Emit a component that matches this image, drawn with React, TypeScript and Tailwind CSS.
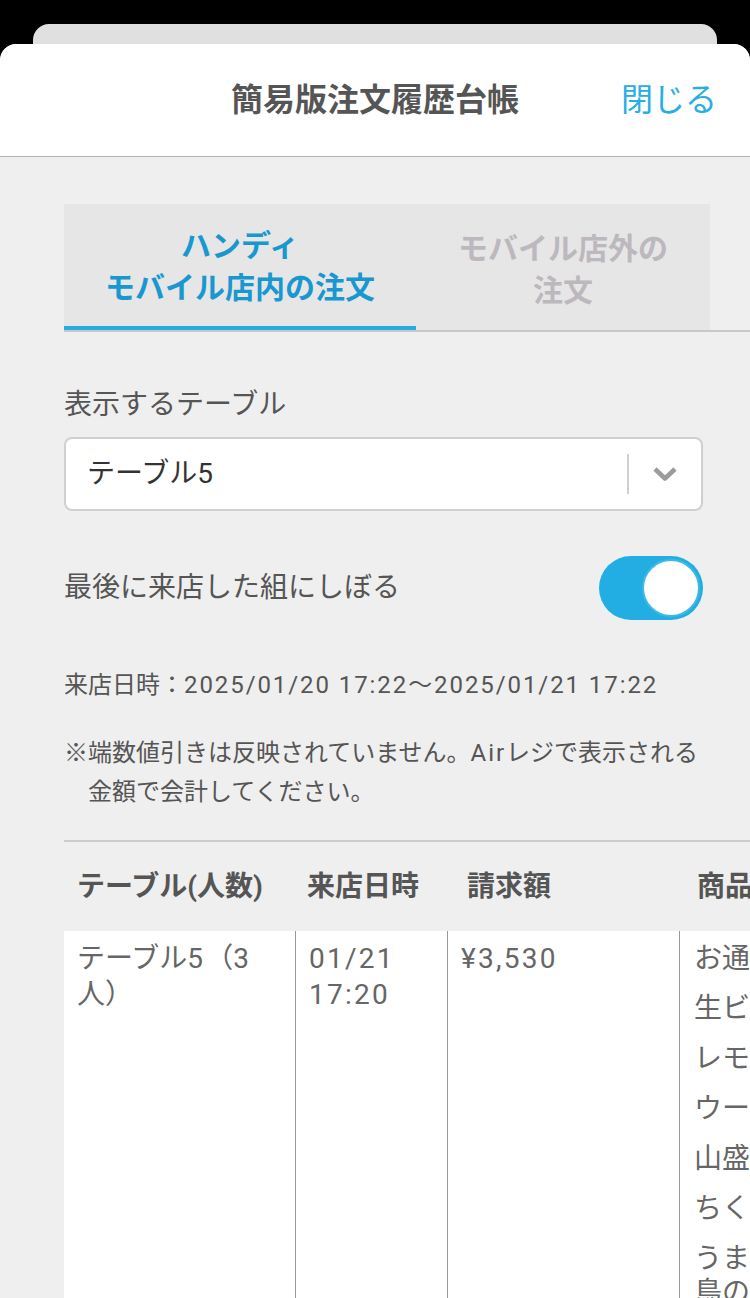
const items = [
  "お通し",
  "生ビール（中）",
  "レモンサワー",
  "ウーロン茶",
  "山盛りポテトフライ",
  "ちくわの磯辺揚げ",
  "うまみたっぷり炭火焼き鳥の盛り合わせ",
];

// Latin digits in the reference run wider than Roboto, so they get a bit of tracking
const Num = ({ children }: { children: React.ReactNode }) => (
  <span className="tracking-[0.08em]">{children}</span>
);

export default function App() {
  return (
    <div className="h-[1298px] overflow-hidden bg-black pt-[24px] font-['Roboto','Noto_Sans_CJK_JP',sans-serif]">
      {/* sheet behind */}
      <div className="mx-[33px] h-[20px] rounded-t-[16px] bg-[#e0e0e0]" />

      <div className="h-full overflow-hidden rounded-t-[16px] bg-[#efefef]">
        {/* header */}
        <header className="grid h-[113px] grid-cols-[1fr_auto_1fr] items-center rounded-t-[16px] border-b border-[#b3b3b3] bg-white">
          <div />
          <h1 className="text-[32px] font-bold text-[#555]">簡易版注文履歴台帳</h1>
          <button className="justify-self-end pr-[33px] text-[32px] text-[#27aee5]">閉じる</button>
        </header>

        {/* tabs */}
        <div className="mt-[47px] ml-[64px] border-b-2 border-[#c8c8c8]">
          <div className="flex h-[126px] w-[646px] bg-[#e6e6e6]">
            <div className="flex w-[352px] flex-col items-center justify-center border-b-4 border-[#22aee3] pt-[4px] text-[30px] font-bold leading-[42px] text-[#1897d0]">
              <span>ハンディ</span>
              <span>モバイル店内の注文</span>
            </div>
            <div className="flex flex-1 flex-col items-center justify-center pt-[6px] text-[30px] font-bold leading-[42px] text-[#bdb8be]">
              <span>モバイル店外の</span>
              <span>注文</span>
            </div>
          </div>
        </div>

        {/* form */}
        <div className="pl-[64px] pr-[47px]">
          <p className="mt-[53px] text-[28px] leading-[40px] text-[#555]">表示するテーブル</p>
          <div className="mt-[12px] flex h-[74px] items-center rounded-[8px] border-2 border-[#d0d0d0] bg-white pl-[21px]">
            <span className="flex-1 text-[28px] text-[#333]">
              テーブル<Num>5</Num>
            </span>
            <div className="h-[40px] w-[2px] bg-[#cfcfcf]" />
            <div className="flex w-[72px] items-center justify-center">
              <svg width="26" height="16" viewBox="0 0 26 16" fill="none">
                <path d="M3 3 L13 12.5 L23 3" stroke="#9b9b9b" strokeWidth="4.5" strokeLinejoin="round" />
              </svg>
            </div>
          </div>

          <div className="mt-[45px] flex h-[64px] items-center justify-between">
            <span className="text-[28px] text-[#555]">最後に来店した組にしぼる</span>
            <div className="flex h-[64px] w-[104px] items-center justify-end rounded-full bg-[#22aee3] pr-[3px]">
              <div className="h-[58px] w-[58px] rounded-full border-2 border-[#3db9e8] bg-white" />
            </div>
          </div>

          <p className="mt-[46px] text-[24px] leading-[38px] text-[#555]">
            来店日時：<Num>2025/01/20 17:22〜2025/01/21 17:22</Num>
          </p>

          <p className="mt-[30px] pl-[24px] -indent-[24px] text-[24px] leading-[39px] text-[#555]">
            ※端数値引きは反映されていません。<Num>Air</Num>レジで表示される金額で会計してください。
          </p>
        </div>

        {/* table */}
        <div className="mt-[28px] ml-[64px] border-t-2 border-[#cccccc]">
          <div className="flex h-[89px] w-[1000px] items-center text-[28px] font-bold text-[#555]">
            <div className="w-[232px] pl-[13px]">テーブル(人数)</div>
            <div className="w-[152px] pl-[11px]">来店日時</div>
            <div className="w-[232px] pl-[19px]">請求額</div>
            <div className="w-[300px] pl-[17px]">商品</div>
          </div>
          <div className="flex w-[1000px] bg-white text-[28px] text-[#666]">
            <div className="w-[232px] border-r border-[#9a9a9a] px-[13px] pt-[10px] leading-[36px]">
              テーブル<Num>5</Num>（<Num>3</Num>人）
            </div>
            <div className="w-[152px] border-r border-[#9a9a9a] px-[13px] pt-[10px] leading-[36px]">
              <Num>01/21</Num>
              <br />
              <Num>17:20</Num>
            </div>
            <div className="w-[232px] border-r border-[#9a9a9a] px-[13px] pt-[10px] leading-[36px]">
              <Num>¥3,530</Num>
            </div>
            <div className="w-[350px] pl-[14px] pr-[16px] pt-[11px]">
              {items.map((item) => (
                <p key={item} className="mb-[16px] leading-[34px]">
                  {item}
                </p>
              ))}
            </div>
          </div>
        </div>
      </div>
    </div>
  );
}
